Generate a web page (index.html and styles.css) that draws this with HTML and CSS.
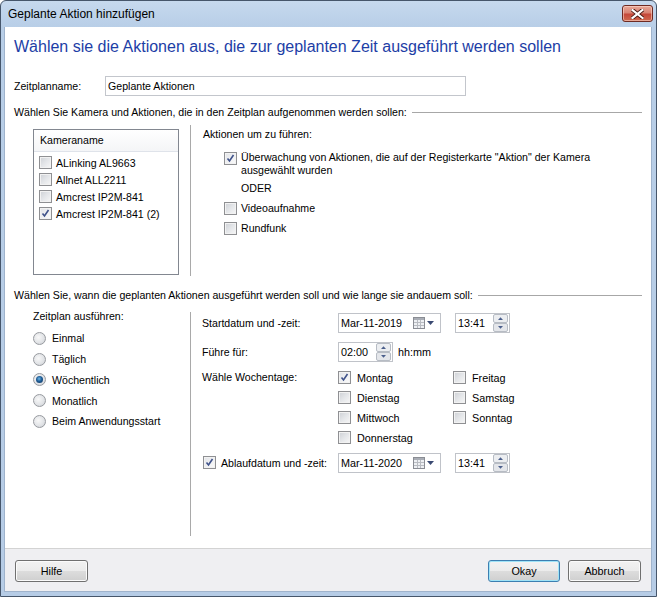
FILE: index.html
```html
<!DOCTYPE html>
<html lang="de">
<head>
<meta charset="utf-8">
<title>Geplante Aktion hinzufügen</title>
<link rel="stylesheet" href="styles.css">
</head>
<body>
<div class="window">
  <div class="titlebar">
    <span class="title">Geplante Aktion hinzufügen</span>
    <div class="close">
      <svg width="13" height="10" viewBox="0 0 13 10"><path d="M1.5 1 L11.5 9 M11.5 1 L1.5 9" stroke="#4a1a14" stroke-width="4" stroke-linecap="square"/><path d="M1.5 1 L11.5 9 M11.5 1 L1.5 9" stroke="#fff" stroke-width="2.2" stroke-linecap="square"/></svg>
    </div>
  </div>
  <div class="client">
    <div class="main">
      <h1 class="heading">Wählen sie die Aktionen aus, die zur geplanten Zeit ausgeführt werden sollen</h1>

      <div class="name-row">
        <span class="name-label">Zeitplanname:</span>
        <div class="textbox">Geplante Aktionen</div>
      </div>

      <div class="group-title"><span>Wählen Sie Kamera und Aktionen, die in den Zeitplan aufgenommen werden sollen:</span><span class="rule"></span></div>

      <div class="section camera-section">
        <div class="left-col camera-left">
          <div class="listbox">
            <div class="list-header">Kameraname</div>
            <div class="list-item"><span class="cb"></span><span>ALinking AL9663</span></div>
            <div class="list-item"><span class="cb"></span><span>Allnet ALL2211</span></div>
            <div class="list-item"><span class="cb"></span><span>Amcrest IP2M-841</span></div>
            <div class="list-item"><span class="cb checked"><svg width="9" height="9" viewBox="0 0 9 9"><path d="M1.5 4.5 L3.5 7 L7.5 1" fill="none" stroke="#3f528a" stroke-width="1.6"/></svg></span><span>Amcrest IP2M-841 (2)</span></div>
          </div>
        </div>
        <div class="vsep camera-vsep"></div>
        <div class="right-col camera-right">
          <div class="line">Aktionen um zu führen:</div>
          <div class="action-item first">
            <span class="cb checked"><svg width="9" height="9" viewBox="0 0 9 9"><path d="M1.5 4.5 L3.5 7 L7.5 1" fill="none" stroke="#3f528a" stroke-width="1.6"/></svg></span>
            <span class="wrap-text">Überwachung von Aktionen, die auf der Registerkarte "Aktion" der Kamera<br>ausgewählt wurden</span>
          </div>
          <div class="line oder">ODER</div>
          <div class="action-row"><span class="cb"></span><span>Videoaufnahme</span></div>
          <div class="action-row"><span class="cb"></span><span>Rundfunk</span></div>
        </div>
      </div>

      <div class="group-title second"><span>Wählen Sie, wann die geplanten Aktionen ausgeführt werden soll und wie lange sie andauem soll:</span><span class="rule"></span></div>

      <div class="section schedule-section">
        <div class="left-col schedule-left">
          <div class="line">Zeitplan ausführen:</div>
          <div class="radio-list">
            <div class="radio-row"><span class="radio"></span><span>Einmal</span></div>
            <div class="radio-row"><span class="radio"></span><span>Täglich</span></div>
            <div class="radio-row"><span class="radio selected"><span class="dot"></span></span><span>Wöchentlich</span></div>
            <div class="radio-row"><span class="radio"></span><span>Monatlich</span></div>
            <div class="radio-row"><span class="radio"></span><span>Beim Anwendungsstart</span></div>
          </div>
        </div>
        <div class="vsep schedule-vsep"></div>
        <div class="right-col schedule-right">
          <div class="form-row">
            <span class="form-label">Startdatum und -zeit:</span>
            <div class="field datepicker">
              <span>Mar-11-2019</span>
              <span class="dp-icons">
                <svg width="12" height="12" viewBox="0 0 12 12"><rect x="0.5" y="0.5" width="11" height="11" fill="#eef0f3" stroke="#8a8d94"/><rect x="1" y="1" width="10" height="2" fill="#a9adb5"/><path d="M4.5 3 V11 M7.5 3 V11 M1 5.5 H11 M1 8.5 H11" stroke="#b9bcc2" stroke-width="1"/></svg>
                <svg width="7" height="4" viewBox="0 0 7 4"><path d="M0 0 H7 L3.5 4 Z" fill="#3a4a72"/></svg>
              </span>
            </div>
            <div class="field timebox">
              <span>13:41</span>
              <span class="spin"><svg width="15" height="18" viewBox="0 0 15 18"><rect x="0.5" y="0.5" width="14" height="8" rx="1.5" fill="#eceef1" stroke="#b7bcc4"/><rect x="0.5" y="9.5" width="14" height="8" rx="1.5" fill="#e4e6ea" stroke="#b7bcc4"/><path d="M5 6 H10 L7.5 3.2 Z" fill="#4b5f8c"/><path d="M5 12 H10 L7.5 14.8 Z" fill="#4b5f8c"/></svg></span>
            </div>
          </div>
          <div class="form-row duration-row">
            <span class="form-label">Führe für:</span>
            <div class="field durbox">
              <span>02:00</span>
              <span class="spin"><svg width="15" height="18" viewBox="0 0 15 18"><rect x="0.5" y="0.5" width="14" height="8" rx="1.5" fill="#eceef1" stroke="#b7bcc4"/><rect x="0.5" y="9.5" width="14" height="8" rx="1.5" fill="#e4e6ea" stroke="#b7bcc4"/><path d="M5 6 H10 L7.5 3.2 Z" fill="#4b5f8c"/><path d="M5 12 H10 L7.5 14.8 Z" fill="#4b5f8c"/></svg></span>
            </div>
            <span class="unit">hh:mm</span>
          </div>
          <div class="form-row weekday-row">
            <span class="form-label weekday-label">Wähle Wochentage:</span>
            <div class="weekdays">
              <div class="day"><span class="cb checked"><svg width="9" height="9" viewBox="0 0 9 9"><path d="M1.5 4.5 L3.5 7 L7.5 1" fill="none" stroke="#3f528a" stroke-width="1.6"/></svg></span><span>Montag</span></div>
              <div class="day"><span class="cb"></span><span>Dienstag</span></div>
              <div class="day"><span class="cb"></span><span>Mittwoch</span></div>
              <div class="day"><span class="cb"></span><span>Donnerstag</span></div>
              <div class="day"><span class="cb"></span><span>Freitag</span></div>
              <div class="day"><span class="cb"></span><span>Samstag</span></div>
              <div class="day"><span class="cb"></span><span>Sonntag</span></div>
            </div>
          </div>
          <div class="form-row expiry-row">
            <span class="form-label expiry-label"><span class="cb checked"><svg width="9" height="9" viewBox="0 0 9 9"><path d="M1.5 4.5 L3.5 7 L7.5 1" fill="none" stroke="#3f528a" stroke-width="1.6"/></svg></span><span>Ablaufdatum und -zeit:</span></span>
            <div class="field datepicker">
              <span>Mar-11-2020</span>
              <span class="dp-icons">
                <svg width="12" height="12" viewBox="0 0 12 12"><rect x="0.5" y="0.5" width="11" height="11" fill="#eef0f3" stroke="#8a8d94"/><rect x="1" y="1" width="10" height="2" fill="#a9adb5"/><path d="M4.5 3 V11 M7.5 3 V11 M1 5.5 H11 M1 8.5 H11" stroke="#b9bcc2" stroke-width="1"/></svg>
                <svg width="7" height="4" viewBox="0 0 7 4"><path d="M0 0 H7 L3.5 4 Z" fill="#3a4a72"/></svg>
              </span>
            </div>
            <div class="field timebox">
              <span>13:41</span>
              <span class="spin"><svg width="15" height="18" viewBox="0 0 15 18"><rect x="0.5" y="0.5" width="14" height="8" rx="1.5" fill="#eceef1" stroke="#b7bcc4"/><rect x="0.5" y="9.5" width="14" height="8" rx="1.5" fill="#e4e6ea" stroke="#b7bcc4"/><path d="M5 6 H10 L7.5 3.2 Z" fill="#4b5f8c"/><path d="M5 12 H10 L7.5 14.8 Z" fill="#4b5f8c"/></svg></span>
            </div>
          </div>
        </div>
      </div>
    </div>
    <div class="footer">
      <button class="btn">Hilfe</button>
      <span class="spacer"></span>
      <button class="btn default">Okay</button>
      <button class="btn">Abbruch</button>
    </div>
  </div>
</div>
</body>
</html>
```

FILE: styles.css
```css
* { box-sizing: border-box; }
html, body { margin: 0; padding: 0; }
body {
  width: 657px;
  height: 597px;
  overflow: hidden;
  background: #fff;
  font-family: "Liberation Sans", Arial, sans-serif;
  font-size: 10.6px;
  color: #000;
}
.window {
  width: 657px;
  height: 597px;
  display: flex;
  flex-direction: column;
  border: 1px solid #46566b;
  border-radius: 6px 6px 0 0;
  background: linear-gradient(#c6d9ee, #b8cee7 26px, #b6cce6);
}
.titlebar {
  height: 26px;
  flex: none;
  display: flex;
  align-items: flex-start;
  padding-left: 7px;
}
.title {
  font-size: 12px;
  line-height: 14px;
  margin-top: 6px;
  color: #000;
}
.close {
  margin-left: auto;
  margin-right: 3px;
  margin-top: 4px;
  width: 31px;
  height: 17px;
  border: 1px solid #6e2a22;
  border-radius: 3px;
  background: linear-gradient(#e9a999 0%, #d88373 45%, #c5483a 55%, #cf6a4f 100%);
  box-shadow: inset 0 0 0 1px rgba(255,220,210,0.55);
  display: flex;
  align-items: center;
  justify-content: center;
}
.client {
  flex: 1;
  margin: 0 4px 4px 3px;
  display: flex;
  flex-direction: column;
  background: #fff;
  border: 1px solid #9fb3cc;
  border-top: none;
}
.main {
  flex: 1;
  padding: 10px 9px 0 9px;
  background: #fff;
}
.heading {
  margin: 0;
  font-size: 16px;
  line-height: 20px;
  font-weight: normal;
  color: #1d3ea6;
  white-space: nowrap;
}
.name-row {
  margin-top: 19px;
  display: flex;
  align-items: center;
  height: 20px;
}
.name-label { width: 91px; }
.textbox {
  width: 361px;
  height: 20px;
  border: 1px solid #c3c6cc;
  padding-left: 2px;
  line-height: 18px;
}
.group-title {
  margin-top: 10px;
  display: flex;
  align-items: center;
  line-height: 13px;
  white-space: nowrap;
}
.group-title.second { margin-top: 13px; }
.rule {
  flex: 1;
  height: 1px;
  margin-left: 5px;
  background: #a7a7a7;
}
.section { display: flex; margin-top: 6px; }
.camera-section { height: 151px; }
.left-col { width: 176px; flex: none; }
.camera-left { padding: 4px 0 0 19px; }
.vsep {
  width: 1px;
  flex: none;
  background: #a9a9a9;
}
.camera-vsep { height: 151px; }
.right-col { flex: 1; }
.camera-right { padding: 3px 0 0 12px; }
.line { line-height: 13px; }

.listbox {
  width: 146px;
  height: 146px;
  border: 1px solid #828790;
  background: #fff;
}
.list-header {
  height: 22px;
  line-height: 21px;
  padding-left: 6px;
  border-bottom: 1px solid #dfe3ea;
  background: linear-gradient(#ffffff, #f4f5f7);
  margin-bottom: 2px;
}
.list-item {
  height: 17px;
  display: flex;
  align-items: center;
  gap: 4px;
  padding-left: 5px;
}

.cb {
  width: 13px;
  height: 13px;
  flex: none;
  border: 1px solid #8f9093;
  background: linear-gradient(135deg, #cdd0d5 0%, #e4e6e9 50%, #f7f7f7 100%);
  box-shadow: inset 0 0 0 1px #f2f2f2;
  display: inline-flex;
  align-items: center;
  justify-content: center;
}
.cb.checked { background: linear-gradient(135deg, #e2e4e8, #fbfbfb); }

.action-item {
  display: flex;
  align-items: flex-start;
  gap: 4px;
  padding-left: 21px;
}
.action-item.first { margin-top: 10px; }
.action-item .cb { margin-top: 1px; }
.wrap-text { line-height: 13px; }
.oder { margin-top: 5px; padding-left: 38px; }
.action-row {
  height: 20px;
  display: flex;
  align-items: center;
  gap: 4px;
  padding-left: 21px;
}
.oder + .action-row { margin-top: 3px; }

.schedule-section { height: 232px; }
.schedule-left { padding: 2px 0 0 19px; }
.radio-list { margin-top: 5px; }
.radio-row {
  height: 20.75px;
  display: flex;
  align-items: center;
  gap: 6px;
}
.radio {
  width: 13px;
  height: 13px;
  flex: none;
  border-radius: 50%;
  border: 1px solid #979a9f;
  background: radial-gradient(circle at 40% 40%, #f8f8f8 0%, #e2e4e7 55%, #c9ccd1 100%);
  display: inline-flex;
  align-items: center;
  justify-content: center;
}
.radio .dot {
  width: 7px;
  height: 7px;
  border-radius: 50%;
  background: radial-gradient(circle at 45% 40%, #6fb8e8 0%, #1f5d96 45%, #0e2f5a 100%);
}
.schedule-vsep { height: 224px; margin-top: 3.5px; }
.schedule-right { padding: 4.5px 0 0 11px; }

.form-row {
  display: flex;
  align-items: center;
  min-height: 20px;
}
.form-label { width: 136px; flex: none; }
.duration-row { margin-top: 9px; }
.weekday-row { margin-top: 6px; align-items: flex-start; }
.weekday-label { line-height: 20px; margin-top: -1px; }
.expiry-row { margin-top: 5px; }
.expiry-label {
  display: flex;
  align-items: center;
  gap: 5px;
  padding-left: 1px;
}

.field {
  height: 20px;
  border: 1px solid #c0c3c9;
  display: flex;
  align-items: center;
  padding-left: 2px;
  background: #fff;
  font-size: 10.8px;
}
.datepicker { width: 103px; }
.dp-icons {
  margin-left: auto;
  padding-right: 6px;
  display: flex;
  align-items: center;
  gap: 2px;
}
.timebox { width: 55px; margin-left: 14px; }
.durbox { width: 55px; }
.spin {
  margin-left: auto;
  padding-right: 1px;
  display: flex;
}
.unit { margin-left: 5px; font-size: 10.8px; }

.weekdays {
  display: grid;
  grid-template-columns: 115px auto;
  grid-template-rows: repeat(4, 20px);
  grid-auto-flow: column;
}
.day {
  display: flex;
  align-items: center;
  gap: 6px;
  font-size: 10.8px;
}

.footer {
  height: 43px;
  flex: none;
  border-top: 1px solid #d3d3d3;
  background: #efeff2;
  display: flex;
  align-items: flex-start;
  padding: 11px 10px 0 10px;
  gap: 8px;
}
.spacer { flex: 1; }
.btn {
  width: 73px;
  height: 22px;
  font-family: "Liberation Sans", Arial, sans-serif;
  font-size: 10.8px;
  color: #000;
  border: 1px solid #707070;
  border-radius: 3px;
  background: linear-gradient(#f2f2f2 0%, #ebebeb 50%, #dddddd 50%, #cfcfcf 100%);
  box-shadow: inset 0 0 0 1px #fbfbfb;
  padding: 0;
}
.btn.default {
  width: 72px;
  border-color: #3c7fb1;
  box-shadow: inset 0 0 0 1px #9fe3f7;
}
```
